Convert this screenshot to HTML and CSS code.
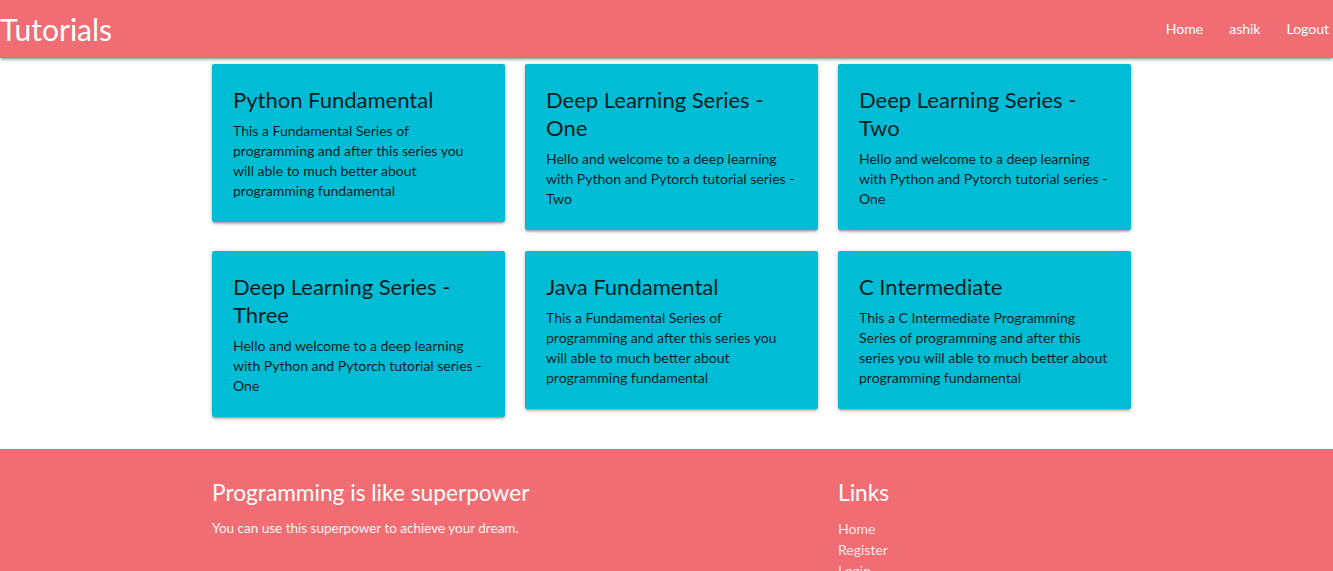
FILE: index.html
```html
<!DOCTYPE html>
<html lang="en">
<head>
<meta charset="utf-8">
<title>Tutorials</title>
<link rel="stylesheet" href="styles.css">
</head>
<body>
<nav class="navbar">
  <a class="brand" href="#">Tutorials</a>
  <ul class="nav-links">
    <li><a href="#">Home</a></li>
    <li><a href="#">ashik</a></li>
    <li><a href="#">Logout</a></li>
  </ul>
</nav>

<main class="container">
  <div class="grid">
    <div class="card">
      <h3 class="card-title">Python Fundamental</h3>
      <p class="card-text">This a Fundamental Series of programming and after this series you will able to much better about programming fundamental</p>
    </div>
    <div class="card">
      <h3 class="card-title">Deep Learning Series - One</h3>
      <p class="card-text">Hello and welcome to a deep learning with Python and Pytorch tutorial series - Two</p>
    </div>
    <div class="card">
      <h3 class="card-title">Deep Learning Series - Two</h3>
      <p class="card-text">Hello and welcome to a deep learning with Python and Pytorch tutorial series - One</p>
    </div>
    <div class="card">
      <h3 class="card-title">Deep Learning Series - Three</h3>
      <p class="card-text">Hello and welcome to a deep learning with Python and Pytorch tutorial series - One</p>
    </div>
    <div class="card">
      <h3 class="card-title">Java Fundamental</h3>
      <p class="card-text">This a Fundamental Series of programming and after this series you will able to much better about programming fundamental</p>
    </div>
    <div class="card">
      <h3 class="card-title">C Intermediate</h3>
      <p class="card-text">This a C Intermediate Programming Series of programming and after this series you will able to much better about programming fundamental</p>
    </div>
  </div>
</main>

<footer class="footer">
  <div class="footer-grid">
    <div class="footer-col">
      <h4 class="footer-title">Programming is like superpower</h4>
      <p class="footer-text">You can use this superpower to achieve your dream.</p>
    </div>
    <div class="footer-col">
      <h4 class="footer-title">Links</h4>
      <ul class="footer-links">
        <li><a href="#">Home</a></li>
        <li><a href="#">Register</a></li>
        <li><a href="#">Login</a></li>
      </ul>
    </div>
  </div>
</footer>
</body>
</html>
```

FILE: styles.css
```css
* { box-sizing: border-box; }

html, body {
  margin: 0;
  padding: 0;
}

body {
  font-family: Lato, "Noto Sans", sans-serif;
  color: rgba(0, 0, 0, 0.87);
  background: #ffffff;
}

a { text-decoration: none; color: inherit; }
ul { list-style: none; margin: 0; padding: 0; }

.navbar {
  height: 58px;
  background: #f06e73;
  display: flex;
  align-items: center;
  justify-content: space-between;
  box-shadow: 0 2px 2px 0 rgba(0,0,0,0.14), 0 3px 1px -2px rgba(0,0,0,0.12), 0 1px 5px 0 rgba(0,0,0,0.2);
  position: relative;
  z-index: 2;
}

.brand {
  color: #ffffff;
  font-size: 30px;
  font-weight: 400;
  line-height: 58px;
}

.nav-links {
  display: flex;
  gap: 26px;
  padding-right: 4px;
}

.nav-links a {
  color: #ffffff;
  font-size: 14px;
  line-height: 58px;
}

.container {
  width: 933px;
  margin: 0 auto;
  padding: 6px 0 32px 12px;
}

.grid {
  display: grid;
  grid-template-columns: repeat(3, 293px);
  column-gap: 20px;
  row-gap: 21px;
  align-items: start;
}

.card {
  background: #00bcd4;
  border-radius: 2px;
  padding: 21.5px 21px 21.5px 21px;
  box-shadow: 0 2px 2px 0 rgba(0,0,0,0.14), 0 3px 1px -2px rgba(0,0,0,0.12), 0 1px 5px 0 rgba(0,0,0,0.2);
}

.card-title {
  margin: 0 0 7px 0;
  font-size: 22px;
  line-height: 28px;
  font-weight: 400;
  color: rgba(0, 0, 0, 0.87);
}

.card-text {
  margin: 0;
  font-size: 14px;
  line-height: 20px;
  color: rgba(0, 0, 0, 0.87);
}

.footer {
  background: #f06e73;
  padding-top: 30px;
  min-height: 140px;
}

.footer-grid {
  width: 933px;
  margin: 0 auto;
  padding-left: 12px;
  display: grid;
  grid-template-columns: 606px 293px;
  column-gap: 20px;
}

.footer-title {
  margin: 0 0 11px 0;
  font-size: 22.7px;
  line-height: 28px;
  font-weight: 400;
  color: #ffffff;
}

.footer-text {
  margin: 0;
  font-size: 13.5px;
  line-height: 20px;
  color: #f5f5f5;
}

.footer-links a {
  font-size: 14px;
  line-height: 20px;
  color: rgba(255, 255, 255, 0.85);
}

.footer-links li {
  line-height: 20px;
}
```
